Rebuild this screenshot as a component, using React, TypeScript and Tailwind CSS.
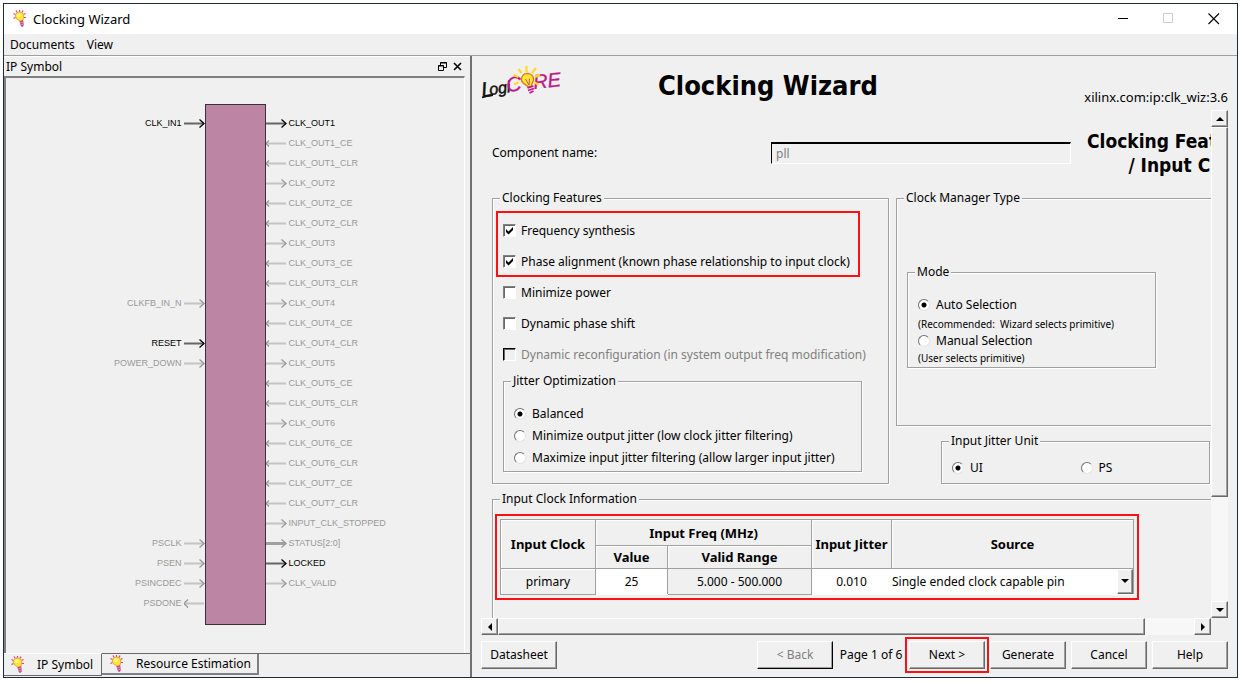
import { useState, type ReactNode } from "react";

const RAISED =
  "border border-t-white border-l-white border-r-[#696969] border-b-[#696969] bg-[#f0f0f0] shadow-[inset_-1px_-1px_0_#a0a0a0]";

interface Pin {
  name: string;
  dir?: "left" | "right";
  active?: boolean;
  bus?: boolean;
}

const leftPins: Record<number, Pin> = {
  0: { name: "CLK_IN1", active: true },
  9: { name: "CLKFB_IN_N" },
  11: { name: "RESET", active: true },
  12: { name: "POWER_DOWN" },
  21: { name: "PSCLK" },
  22: { name: "PSEN" },
  23: { name: "PSINCDEC" },
  24: { name: "PSDONE", dir: "left" },
};

const rightPins: Pin[] = [
  { name: "CLK_OUT1", active: true },
  { name: "CLK_OUT1_CE", dir: "left" },
  { name: "CLK_OUT1_CLR", dir: "left" },
  { name: "CLK_OUT2" },
  { name: "CLK_OUT2_CE", dir: "left" },
  { name: "CLK_OUT2_CLR", dir: "left" },
  { name: "CLK_OUT3" },
  { name: "CLK_OUT3_CE", dir: "left" },
  { name: "CLK_OUT3_CLR", dir: "left" },
  { name: "CLK_OUT4" },
  { name: "CLK_OUT4_CE", dir: "left" },
  { name: "CLK_OUT4_CLR", dir: "left" },
  { name: "CLK_OUT5" },
  { name: "CLK_OUT5_CE", dir: "left" },
  { name: "CLK_OUT5_CLR", dir: "left" },
  { name: "CLK_OUT6" },
  { name: "CLK_OUT6_CE", dir: "left" },
  { name: "CLK_OUT6_CLR", dir: "left" },
  { name: "CLK_OUT7_CE", dir: "left" },
  { name: "CLK_OUT7_CLR", dir: "left" },
  { name: "INPUT_CLK_STOPPED" },
  { name: "STATUS[2:0]", bus: true },
  { name: "LOCKED", active: true },
  { name: "CLK_VALID" },
];

function BulbIcon() {
  return (
    <svg width="14" height="18" viewBox="0 0 14 18" className="shrink-0">
      <g stroke="#d0487a" strokeWidth="1.2">
        <path d="M6.5 0v2.5M3 .5l1.2 2M.5 3.5l2 1M10 .5l-1 2M12.5 3.5l-2 1M13 7.5h-2M.5 8.5l2-1" />
      </g>
      <path d="M6.5 2c2.6 0 4.3 1.8 4.3 4.2 0 1.7-.9 2.5-.9 4.3l-3 .8c-.8-1.3-4.6-2.1-4.6-5.1C2.3 3.8 4 2 6.5 2z" fill="#ffe733" stroke="#e8923c" strokeWidth=".9" />
      <circle cx="5.8" cy="5.2" r="1.9" fill="#fff98a" />
      <path d="M6.4 11.3l3.8-1 .6 5-1.3 1.7-1.6-.7z" fill="#c04a86" />
      <path d="M6.9 13l3.4-1M7.5 15l3-.9" stroke="#eaa6c4" strokeWidth=".7" />
    </svg>
  );
}

function Logo() {
  return (
    <svg width="82" height="38" viewBox="0 0 82 38" role="img" aria-label="LogiCORE">
      <g fontFamily="'Liberation Sans Narrow', 'Liberation Sans', sans-serif" fontStyle="italic">
        <g fill="#111" stroke="#111" strokeWidth=".5" transform="rotate(-8 2 32)">
          <text x="1" y="33" fontSize="21">L</text>
          <text x="9" y="32" fontSize="16">ogi</text>
        </g>
        <g fill="#c0188a" stroke="#c0188a" strokeWidth=".3">
          <text x="26" y="28" fontSize="21" transform="rotate(-6 26 28)">C</text>
          <text x="53" y="25" fontSize="20" transform="rotate(-6 53 25)">RE</text>
        </g>
      </g>
      <path d="M1 33.5q6-2 11-2.500" stroke="#111" strokeWidth="1.8" fill="none" />
      <g stroke="#ffdc1c" strokeWidth="2.2">
        <path d="M45.5 8V2M40.5 9l-3-4M51 9l4-5M37.5 13l-5-2M54 13l5-2.5M37.5 18.5l-4.5 2M53.5 18.5l4 2" />
      </g>
      <path d="M46 9.5c3.700 0 6.500 2.400 6.500 5.900 0 2.700-2 3.600-1.800 6.400l-3.700 1.200c-.8-2.500-6.500-3-6.500-7.300 0-3.600 2.300-6.200 5.500-6.200z" fill="#ffe92a" stroke="#e07a2a" strokeWidth="1.4" />
      <path d="M44.5 15l3.5 6 .5-6.5" stroke="#c8508a" fill="none" />
      <path d="M46.5 24l6-2M47 26.5l6-2M48.5 29l4-2" stroke="#c0188a" strokeWidth="1.8" />
    </svg>
  );
}

function PinArrow({ dir = "right", active, bus, inward }: Omit<Pin, "name"> & { inward?: boolean }) {
  const head = active ? "#000" : "#999";
  const line = bus ? "#a0a0a0" : active ? "#666" : "#c4c4c4";
  return (
    <svg width="21" height="11" viewBox="0 0 21 11" className="shrink-0">
      <path d="M0 5.5h20" stroke={line} strokeWidth={bus ? 3 : 2} />
      {dir === "right" ? (
        <path d="M15.5 1.5l4.5 4-4.5 4" fill="none" stroke={head} strokeWidth="1.3" />
      ) : (
        <path d={inward ? "M4 1.5l-4 4 4 4" : "M3 2.5l-3 3 3 3"} fill="none" stroke={head} strokeWidth="1.3" />
      )}
    </svg>
  );
}

function IpSymbol() {
  return (
    <div className="grid grid-cols-[1fr_61px_1fr] pt-[26px] font-['Liberation_Sans',Arial,sans-serif] text-[9px] leading-5">
      <div className="pt-[9px]">
        {Array.from({ length: 25 }, (_, i) => {
          const pin = leftPins[i];
          return (
            <div key={i} className={`flex h-5 items-center justify-end gap-[2px] ${pin?.active ? "text-black" : "text-[#999]"}`}>
              {pin && (
                <>
                  <span>{pin.name}</span>
                  <PinArrow dir={pin.dir} active={pin.active} inward />
                </>
              )}
            </div>
          );
        })}
      </div>
      <div className="h-[521px] border border-[#3c3038] bg-[#bd85a4]" />
      <div className="pt-[9px]">
        {rightPins.map((pin) => (
          <div key={pin.name} className={`flex h-5 items-center gap-[2px] ${pin.active ? "text-black" : "text-[#999]"}`}>
            <PinArrow dir={pin.dir} active={pin.active} bus={pin.bus} />
            <span>{pin.name}</span>
          </div>
        ))}
      </div>
    </div>
  );
}

function Group({ title, className = "", children }: { title: string; className?: string; children: ReactNode }) {
  return (
    <fieldset className={`border border-[#a0a0a0] shadow-[1px_1px_0_#fff,inset_1px_1px_0_#fff] ${className}`}>
      <legend className="ml-[7px] bg-[#f0f0f0] px-[2px] leading-4">{title}</legend>
      {children}
    </fieldset>
  );
}

function CheckBox({ label, defaultChecked, disabled }: { label: string; defaultChecked?: boolean; disabled?: boolean }) {
  return (
    <label className={`flex h-[27px] items-center gap-[5px] whitespace-nowrap ${disabled ? "text-[#808080]" : ""}`}>
      <span className="grid">
        <input
          type="checkbox"
          defaultChecked={defaultChecked}
          disabled={disabled}
          className="peer col-start-1 row-start-1 size-[13px] appearance-none border border-t-[#808080] border-l-[#808080] border-r-white border-b-white bg-white shadow-[inset_1px_1px_0_#696969] disabled:border-t-black disabled:border-l-black disabled:bg-[#f0f0f0]"
        />
        <svg viewBox="0 0 13 13" className="pointer-events-none invisible col-start-1 row-start-1 size-[13px] peer-checked:visible">
          <path d="M3 5v3l2.5 2.5 4.500-4.500v-3l-4.500 4.500z" fill="#000" />
        </svg>
      </span>
      {label}
    </label>
  );
}

function Radio({ name, label, defaultChecked, className = "h-[22px]" }: { name: string; label: string; defaultChecked?: boolean; className?: string }) {
  return (
    <label className={`flex items-center gap-[6px] whitespace-nowrap ${className}`}>
      <input
        type="radio"
        name={name}
        defaultChecked={defaultChecked}
        className="size-3 appearance-none rounded-full border border-t-[#707070] border-l-[#707070] border-r-[#e3e3e3] border-b-[#e3e3e3] bg-white checked:bg-[radial-gradient(circle,#000_2px,#fff_3px)]"
      />
      {label}
    </label>
  );
}

function ArrowButton({ label, points }: { label: string; points: string }) {
  return (
    <button type="button" aria-label={label} className={`flex size-[17px] shrink-0 items-center justify-center ${RAISED}`}>
      <svg width="8" height="8" viewBox="0 0 8 8">
        <polygon points={points} />
      </svg>
    </button>
  );
}

function PushButton({ children, disabled }: { children: ReactNode; disabled?: boolean }) {
  return (
    <button
      type="button"
      disabled={disabled}
      className={`h-7 w-19 disabled:border-r-black disabled:border-b-black disabled:text-[#808080] ${RAISED}`}
    >
      {children}
    </button>
  );
}

function DockPanel() {
  return (
    <section className="flex w-[466px] shrink-0 flex-col border-t border-white">
      <div className="flex h-[19px] items-center pr-2 pl-[2px]">
        <h2>IP Symbol</h2>
        <button type="button" aria-label="Float" className="ml-auto">
          <svg width="9" height="9" viewBox="0 0 9 9" fill="none" stroke="#000">
            <path d="M2.5 3V.5h6v5H6M2 1h7M.5 3.5h5v5h-5zM0 4h6" />
          </svg>
        </button>
        <button type="button" aria-label="Close" className="ml-[6px]">
          <svg width="9" height="9" viewBox="0 0 9 9" stroke="#000" strokeWidth="1.6">
            <path d="M1 1l7 7M8 1L1 8" />
          </svg>
        </button>
      </div>
      <div className="mr-[5px] flex-1 border-t-2 border-r border-l-2 border-t-[#808080] border-r-white border-l-[#808080]">
        <IpSymbol />
      </div>
      <div className="flex h-6 items-start" role="tablist">
        <button type="button" role="tab" aria-selected="true" className="flex h-[23px] w-[98px] items-center gap-3 border-t border-r border-b border-t-white border-r-[#696969] border-b-[#696969] pl-[7px] whitespace-nowrap">
          <BulbIcon />
          IP Symbol
        </button>
        <div className="flex flex-1 border-t border-[#696969]">
          <button type="button" role="tab" aria-selected="false" className="flex h-[21px] w-[157px] items-center gap-3 border-r-2 border-b-2 border-[#808080] pl-2 whitespace-nowrap">
            <BulbIcon />
            Resource Estimation
          </button>
        </div>
      </div>
    </section>
  );
}

function ClockTable() {
  const head = "border border-[#a0a0a0] p-0 text-[13px] font-bold shadow-[inset_1px_1px_0_#fff]";
  const cell = "border border-[#a0a0a0] p-0 text-center";
  return (
    <table className="w-full table-fixed border-collapse">
      <colgroup>
        <col className="w-[95px]" />
        <col className="w-[72px]" />
        <col className="w-36" />
        <col className="w-20" />
        <col />
      </colgroup>
      <thead>
        <tr className="h-[26px]">
          <th rowSpan={2} className={head}>Input Clock</th>
          <th colSpan={2} className={head}>Input Freq (MHz)</th>
          <th rowSpan={2} className={`whitespace-nowrap ${head}`}>Input Jitter</th>
          <th rowSpan={2} className={head}>Source</th>
        </tr>
        <tr className="h-[23px]">
          <th className={head}>Value</th>
          <th className={head}>Valid Range</th>
        </tr>
      </thead>
      <tbody>
        <tr className="h-[26px]">
          <td className={`shadow-[inset_1px_1px_0_#fff] ${cell}`}>primary</td>
          <td className={`bg-white ${cell} border-b-white`}>
            <input aria-label="Input frequency value" defaultValue="25" className="w-full bg-white text-center" />
          </td>
          <td className={cell}>5.000 - 500.000</td>
          <td className={`bg-white ${cell} border-r-white border-b-white`}>
            <input aria-label="Input jitter" defaultValue="0.010" className="w-full bg-white text-center" />
          </td>
          <td className={`bg-white ${cell} border-b-white border-l-white`}>
            <div className="flex h-[25px]">
              <select aria-label="Source" className="min-w-0 flex-1 appearance-none bg-white">
                <option>Single ended clock capable pin</option>
              </select>
              <span className={`pointer-events-none flex w-4 items-center justify-center ${RAISED}`}>
                <svg width="8" height="5" viewBox="0 0 8 5">
                  <polygon points="0,0 8,0 4,4" />
                </svg>
              </span>
            </div>
          </td>
        </tr>
      </tbody>
    </table>
  );
}

function WizardPage() {
  const [name, setName] = useState("pll");
  return (
    <div className="min-w-[800px] pt-[19px] pl-[11px]">
      <div className="flex items-center">
        <label htmlFor="component" className="w-[279px] shrink-0">Component name:</label>
        <input
          id="component"
          value={name}
          disabled
          onChange={(e) => setName(e.target.value)}
          className="h-[22px] w-[300px] shrink-0 border border-t-2 border-t-black border-l-black border-r-white border-b-white px-1 text-[#808080]"
        />
        <h2 className="ml-4 text-right font-['DejaVu_Sans_Condensed',sans-serif] text-[19px] leading-6 font-bold whitespace-nowrap">
          Clocking Features
          <br />/ Input Clocks
        </h2>
      </div>
      <div className="mt-[13px] flex gap-[7px]">
        <Group title="Clocking Features" className="w-[397px] shrink-0 pb-[11px]">
          <div className="mt-[5px] ml-[3px] flex w-[364px] flex-col gap-1 border-2 border-[#f11] pt-1 pl-[5px]">
            <CheckBox label="Frequency synthesis" defaultChecked />
            <CheckBox label="Phase alignment (known phase relationship to input clock)" defaultChecked />
          </div>
          <div className="mt-[2px] flex flex-col gap-1 pl-[10px]">
            <CheckBox label="Minimize power" />
            <CheckBox label="Dynamic phase shift" />
            <CheckBox label="Dynamic reconfiguration (in system output freq modification)" disabled />
          </div>
          <Group title="Jitter Optimization" className="mt-[5px] mr-[26px] ml-[10px] pb-[2px]">
            <div className="pt-[14px] pl-[10px]">
              <Radio name="jitter" label="Balanced" defaultChecked />
              <Radio name="jitter" label="Minimize output jitter (low clock jitter filtering)" />
              <Radio name="jitter" label="Maximize input jitter filtering (allow larger input jitter)" />
            </div>
          </Group>
        </Group>
        <div className="flex flex-1 flex-col gap-[7px]">
          <Group title="Clock Manager Type" className="pb-[57px]">
            <Group title="Mode" className="mt-[58px] ml-[10px] w-[249px] pb-px">
              <div className="pt-[14px] pl-[10px]">
                <Radio name="mode" label="Auto Selection" defaultChecked />
                <p className="text-[10px] leading-4 whitespace-pre">{"(Recommended:  Wizard selects primitive)"}</p>
                <Radio name="mode" label="Manual Selection" className="h-[18px]" />
                <p className="text-[10px] leading-4">(User selects primitive)</p>
              </div>
            </Group>
          </Group>
          <Group title="Input Jitter Unit" className="ml-[45px] w-[269px] pb-1">
            <div className="grid grid-cols-2 pt-2 pl-[10px]">
              <Radio name="unit" label="UI" defaultChecked />
              <Radio name="unit" label="PS" />
            </div>
          </Group>
        </div>
      </div>
      <Group title="Input Clock Information" className="mt-[7px] pb-8">
        <div className="mt-[7px] ml-[2px] w-[644px] border-2 border-[#f11] p-[3px]">
          <ClockTable />
        </div>
      </Group>
    </div>
  );
}

export default function App() {
  return (
    <div className="h-screen bg-white p-[3px] pr-[2px] font-['Noto_Sans',sans-serif] text-[12px] leading-4 text-black">
      <div className="flex h-full flex-col border border-[#1b2b3a] bg-[#f0f0f0]">
        <header className="flex h-[30px] shrink-0 items-center bg-white pr-[17px] pb-px pl-[9px]">
          <BulbIcon />
          <span className="ml-[6px] text-[13px]">Clocking Wizard</span>
          <div className="ml-auto flex items-center gap-[34px]">
            <button type="button" aria-label="Minimize">
              <svg width="11" height="11" stroke="#000"><path d="M0 5.5h10" /></svg>
            </button>
            <button type="button" aria-label="Maximize" disabled>
              <svg width="11" height="11" fill="none" stroke="#ccc"><path d="M.5.5h9v9h-9z" /></svg>
            </button>
            <button type="button" aria-label="Close window">
              <svg width="12" height="12" stroke="#000" strokeWidth="1.1"><path d="M.5.5l10.5 10.5M11 .5L.5 11" /></svg>
            </button>
          </div>
        </header>
        <nav className="flex h-[22px] shrink-0 items-center gap-3 border-b border-[#a0a0a0] pl-[6px]">
          <button type="button">Documents</button>
          <button type="button">View</button>
        </nav>
        <div className="flex min-h-0 flex-1">
          <DockPanel />
          <main className="flex min-w-0 flex-1 flex-col border-l-2 border-[#707070] pr-[9px] pl-[9px]">
            <div className="flex h-[54px] shrink-0 pt-2">
              <Logo />
              <h1 className="ml-[95px] pt-1 font-['DejaVu_Sans_Condensed',sans-serif] text-[27px] leading-9 font-bold whitespace-nowrap">Clocking Wizard</h1>
              <span className="ml-auto self-end pb-[5px] text-[13px]">xilinx.com:ip:clk_wiz:3.6</span>
            </div>
            <div className="flex min-h-0 flex-1">
              <div className="min-w-0 flex-1 overflow-hidden">
                <WizardPage />
              </div>
              <div className="flex w-[17px] shrink-0 flex-col">
                <ArrowButton label="Scroll up" points="0,6 8,6 4,2" />
                <div className="flex-1 bg-[#f7f7f7]">
                  <div className={`h-[78%] ${RAISED}`} />
                </div>
                <ArrowButton label="Scroll down" points="0,2 8,2 4,6" />
              </div>
            </div>
            <div className="mr-[17px] flex shrink-0">
              <ArrowButton label="Scroll left" points="6,0 6,8 2,4" />
              <div className="flex-1 bg-[#f7f7f7]">
                <div className={`h-full w-[93%] ${RAISED}`} />
              </div>
              <ArrowButton label="Scroll right" points="2,0 2,8 6,4" />
            </div>
            <footer className="flex shrink-0 items-center gap-[5px] pt-[6px] pb-2">
              <PushButton>Datasheet</PushButton>
              <div className="ml-auto">
                <PushButton disabled>&lt; Back</PushButton>
              </div>
              <span className="w-[66px] text-center whitespace-nowrap">Page 1 of 6</span>
              <div className="relative">
                <PushButton>Next &gt;</PushButton>
                <span className="pointer-events-none absolute -inset-1 border-2 border-[#f11]" />
              </div>
              <PushButton>Generate</PushButton>
              <PushButton>Cancel</PushButton>
              <PushButton>Help</PushButton>
            </footer>
          </main>
        </div>
      </div>
    </div>
  );
}
